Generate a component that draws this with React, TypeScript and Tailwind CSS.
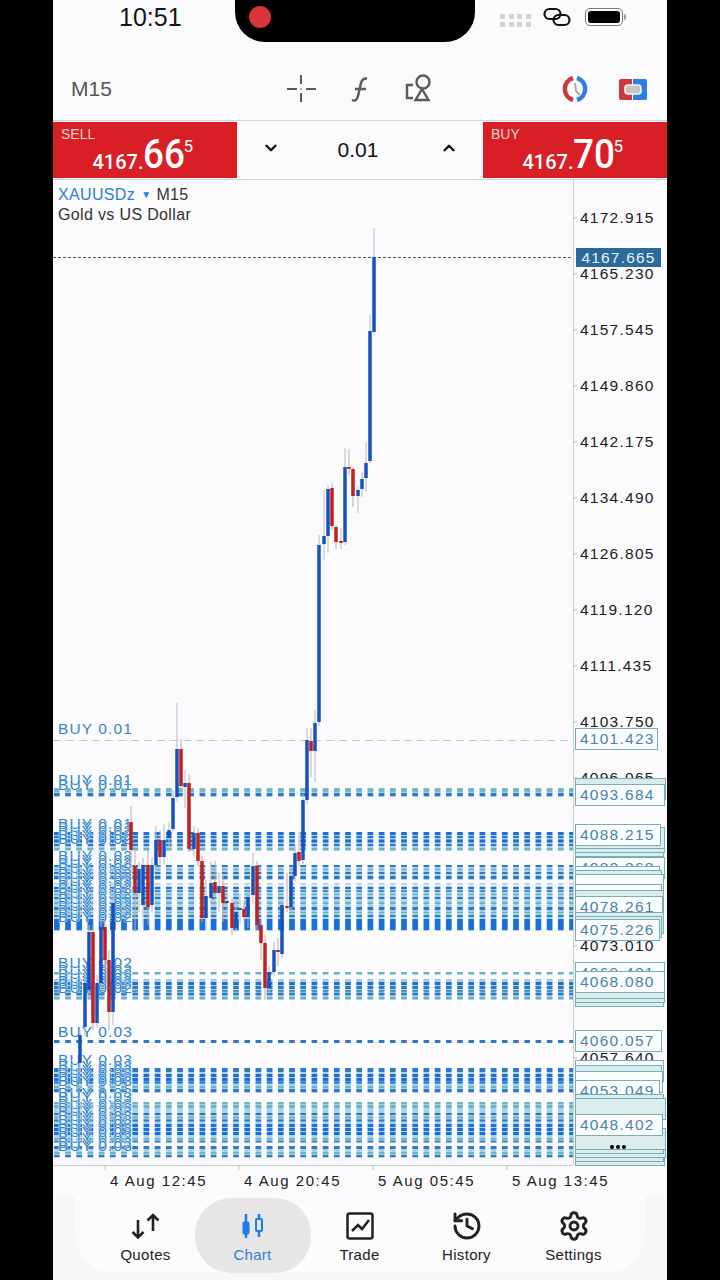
import type React from "react"
import { ChevronDown, ChevronUp, History, Settings } from "lucide-react"

type Candle = [number, number, number, number, number, "b" | "r"]
type Stripe = [number, number, string]
type PriceBox = { y: number; text: string; right: number; filler?: boolean }

const BLUE = "#1c6fd8"
const MID = "#2f78c4"
const TEAL = "#6db3bd"
const GREY = "#a9c6cc"

// x, body top, body bottom, wick top, wick bottom (page coordinates)
const candles: Candle[] = [
  [80, 1035, 1063, 1030, 1072, "b"],
  [85, 983, 1027, 975, 1036, "b"],
  [89, 932, 990, 925, 1000, "b"],
  [93, 932, 1023, 925, 1030, "r"],
  [97, 983, 1023, 975, 1028, "b"],
  [101, 927, 983, 920, 990, "b"],
  [105, 927, 960, 920, 968, "r"],
  [109, 960, 1012, 950, 1030, "r"],
  [113, 903, 1012, 895, 1025, "b"],
  [131, 822, 850, 806, 872, "r"],
  [135, 866, 893, 850, 932, "r"],
  [139, 869, 893, 862, 912, "b"],
  [143, 865, 905, 858, 925, "b"],
  [148, 865, 907, 850, 925, "r"],
  [152, 865, 905, 858, 912, "b"],
  [156, 840, 865, 826, 870, "b"],
  [160, 840, 857, 830, 868, "r"],
  [164, 840, 857, 824, 864, "b"],
  [169, 830, 838, 822, 846, "b"],
  [173, 798, 829, 790, 832, "b"],
  [177, 749, 797, 703, 802, "b"],
  [181, 749, 786, 739, 792, "r"],
  [185, 783, 787, 770, 808, "b"],
  [189, 783, 849, 774, 852, "r"],
  [194, 833, 849, 826, 856, "b"],
  [198, 833, 861, 828, 866, "r"],
  [202, 861, 918, 856, 922, "r"],
  [206, 896, 918, 880, 930, "b"],
  [211, 883, 898, 862, 905, "b"],
  [215, 882, 893, 861, 899, "r"],
  [219, 886, 893, 872, 912, "b"],
  [223, 886, 903, 876, 922, "r"],
  [227, 901, 903, 894, 920, "b"],
  [232, 903, 928, 898, 935, "r"],
  [236, 912, 928, 900, 932, "b"],
  [240, 908, 910, 894, 924, "b"],
  [244, 909, 917, 900, 922, "r"],
  [248, 897, 917, 890, 928, "b"],
  [253, 866, 895, 853, 904, "b"],
  [257, 866, 925, 861, 930, "r"],
  [261, 925, 943, 920, 960, "r"],
  [265, 943, 988, 935, 1000, "r"],
  [269, 972, 988, 966, 994, "b"],
  [274, 950, 972, 942, 976, "b"],
  [278, 950, 952, 938, 966, "r"],
  [282, 905, 954, 900, 958, "b"],
  [287, 906, 908, 873, 912, "r"],
  [291, 876, 907, 868, 912, "b"],
  [295, 853, 876, 845, 882, "b"],
  [299, 852, 861, 832, 866, "r"],
  [303, 800, 860, 794, 864, "b"],
  [307, 740, 800, 728, 804, "b"],
  [311, 741, 751, 728, 777, "r"],
  [315, 723, 751, 710, 782, "b"],
  [319, 545, 722, 535, 726, "b"],
  [324, 536, 544, 490, 560, "b"],
  [328, 489, 536, 485, 553, "b"],
  [332, 488, 526, 483, 530, "r"],
  [336, 527, 542, 525, 549, "r"],
  [341, 541, 543, 528, 549, "r"],
  [345, 467, 542, 448, 545, "b"],
  [349, 467, 469, 449, 475, "r"],
  [353, 469, 496, 467, 507, "r"],
  [358, 490, 496, 486, 513, "b"],
  [362, 479, 489, 472, 497, "b"],
  [366, 463, 478, 442, 492, "b"],
  [370, 331, 461, 315, 463, "b"],
  [374, 257, 332, 228, 335, "b"],
]

// pale wash behind each group of order lines
const bands: [number, number][] = [
  [788, 797], [832, 851], [865, 880], [886, 931], [972, 975], [979, 1000], [1068, 1093], [1102, 1143], [1146, 1158],
]

// order lines: y, thickness, colour. Dense groups give the banded look
const stripes: Stripe[] = [
  [790, 3.5, TEAL], [794.5, 3, MID],
  [833.5, 3, BLUE], [837, 2, MID], [841, 3, BLUE], [845, 2, MID], [849, 2, TEAL],
  [866, 2, MID], [869.5, 1.5, TEAL], [873, 2, MID], [877.5, 3, MID], [884, 1.5, GREY],
  [888, 2, BLUE], [891, 1.5, MID], [894.5, 1.5, TEAL], [898, 2, MID], [903, 2, TEAL],
  [908.5, 3, MID], [912.5, 1.5, TEAL], [916, 2, MID], [920, 2, BLUE], [922.5, 3, BLUE], [927, 6, BLUE],
  [973, 2, TEAL], [980, 1.5, GREY], [983.5, 3, BLUE], [987.5, 3, MID], [991, 1.5, MID], [994, 2.5, MID], [998, 2, TEAL],
  [1041.5, 3, MID],
  [1070, 4, MID], [1075.5, 3, BLUE], [1079.5, 3, BLUE], [1082.5, 2, BLUE], [1087, 2, TEAL], [1090.5, 3, MID],
  [1103, 2, TEAL], [1106.5, 3, TEAL], [1114, 2, MID], [1117.5, 2, TEAL], [1120.5, 2, MID],
  [1125.5, 3, BLUE], [1129.5, 3, BLUE], [1133.5, 3, BLUE], [1139, 2, TEAL], [1141.5, 1.5, MID],
  [1147.5, 3, MID], [1153, 2, TEAL], [1156, 2, MID],
]

const lotFor = (y: number) => (y < 840 ? "0.01" : y < 1000 ? "0.02" : "0.03")

const axisPrices: [number, string][] = [
  [218, "4172.915"], [274, "4165.230"], [330, "4157.545"], [386, "4149.860"],
  [442, "4142.175"], [498, "4134.490"], [554, "4126.805"], [610, "4119.120"],
  [666, "4111.435"], [722, "4103.750"], [778, "4096.065"], [946, "4073.010"],
  [1058, "4057.640"],
]

// painted in order, later boxes sit over earlier ones
const priceBoxes: PriceBox[] = [
  { y: 739, text: "4101.423", right: 658 },
  { y: 789, text: "4094.901", right: 666, filler: true },
  { y: 795, text: "4093.684", right: 665 },
  { y: 846, text: "", right: 664, filler: true },
  { y: 842, text: "", right: 665, filler: true },
  { y: 838, text: "", right: 665, filler: true },
  { y: 835, text: "4088.215", right: 661 },
  { y: 868, text: "4082.868", right: 665 },
  { y: 877, text: "", right: 660 },
  { y: 881, text: "", right: 662, filler: true },
  { y: 885, text: "", right: 664 },
  { y: 895, text: "4080.520", right: 662 },
  { y: 901, text: "", right: 664, filler: true },
  { y: 907, text: "4078.261", right: 663 },
  { y: 923, text: "", right: 664, filler: true },
  { y: 927, text: "", right: 662, filler: true },
  { y: 930, text: "4075.226", right: 660 },
  { y: 996, text: "", right: 664, filler: true },
  { y: 992, text: "", right: 665, filler: true },
  { y: 988, text: "", right: 665, filler: true },
  { y: 973, text: "4069.401", right: 665 },
  { y: 982, text: "4068.080", right: 665 },
  { y: 1041, text: "4060.057", right: 662 },
  { y: 1071, text: "4055.350", right: 664 },
  { y: 1076, text: "", right: 662, filler: true },
  { y: 1082, text: "", right: 663 },
  { y: 1091, text: "4053.049", right: 660 },
  { y: 1105, text: "", right: 664, filler: true },
  { y: 1109, text: "", right: 666, filler: true },
  { y: 1155, text: "", right: 665, filler: true },
  { y: 1151, text: "", right: 664, filler: true },
  { y: 1147, text: "", right: 666, filler: true },
  { y: 1143, text: "", right: 664, filler: true },
  { y: 1139, text: "", right: 666, filler: true },
  { y: 1125, text: "4048.402", right: 663 },
]

const PAGE_X = 53
const CHART_Y = 180

function ChartDrawing() {
  return (
    <svg className="absolute left-0 top-0 h-[985px] w-[614px] overflow-visible" viewBox="53 180 614 985">
      {/* axes */}
      <line x1="573.5" y1="180" x2="573.5" y2="1165" stroke="#cfcfcf" />
      <line x1="53" y1="1165.5" x2="573" y2="1165.5" stroke="#cfcfcf" />
      {axisPrices.map(([y]) => (
        <line key={y} x1="573" y1={y} x2="577" y2={y} stroke="#bdbdbd" />
      ))}
      {[105, 239, 373, 507].map((x) => (
        <line key={x} x1={x} y1="1165" x2={x} y2="1170" stroke="#bdbdbd" />
      ))}

      {/* current price and pending order lines */}
      <line x1="53" y1="257.5" x2="573" y2="257.5" stroke="#555" strokeDasharray="3 2" />
      <line x1="53" y1="740.5" x2="573" y2="740.5" stroke="#b5cfd2" strokeDasharray="8 5" />
      <text x="58" y="734" className="fill-[#3a87bd] text-[15.5px] tracking-[1.1px]">BUY 0.01</text>

      {bands.map(([from, to]) => (
        <line
          key={from}
          x1="54"
          y1={(from + to) / 2}
          x2="573"
          y2={(from + to) / 2}
          stroke="#a6d3ec"
          strokeWidth={to - from}
          strokeDasharray="5.6 5.6"
        />
      ))}
      {stripes.map(([y, h, color]) => (
        <line key={y} x1="54" y1={y} x2="573" y2={y} stroke={color} strokeWidth={h} strokeDasharray="5.6 5.6" />
      ))}
      {stripes.map(([y]) => (
        <text
          key={y}
          x="58"
          y={y - 5}
          stroke="#ffffff"
          strokeWidth="0.7"
          className="fill-[#2b83cc] text-[15.5px] tracking-[1.1px] [paint-order:stroke]"
        >
          BUY {lotFor(y)}
        </text>
      ))}

      {candles.map(([x, top, bottom, wickTop, wickBottom, dir]) => (
        <g key={x}>
          <line x1={x} y1={wickTop} x2={x} y2={wickBottom} stroke={dir === "b" ? "#b4bcc4" : "#c9a9a4"} />
          <rect x={x - 1.75} y={top} width="3.5" height={bottom - top} fill={dir === "b" ? "#1452c2" : "#c41f1c"} />
        </g>
      ))}
    </svg>
  )
}

function PriceScale() {
  return (
    <>
      {axisPrices.map(([y, price]) => (
        <span
          key={price}
          className="absolute left-[527px] text-[15.5px] leading-[18px] tracking-[1.25px] text-[#1c1c1c]"
          style={{ top: y - CHART_Y - 9 }}
        >
          {price}
        </span>
      ))}
      <span className="absolute left-[523px] top-[68px] h-[19px] w-[85px] bg-[#2c6a9c] text-center text-[15.5px] leading-[19px] tracking-[1.2px] text-[#eaf3f8]">
        4167.665
      </span>
      {priceBoxes.map((box, i) => (
        <span
          key={i}
          className={`absolute h-[22px] border border-[#74afbd] pl-[4px] text-[15.5px] leading-[20px] tracking-[1.25px] text-[#4a83ad] ${
            box.filler ? "bg-[#dbeceb]" : "bg-[#fbfdfd]"
          }`}
          style={{ left: 575 - PAGE_X, top: box.y - CHART_Y - 11, width: box.right - 575 }}
        >
          {box.text}
        </span>
      ))}
      <span className="absolute left-[557px] top-[965px] flex gap-[2px]">
        <span className="h-[4px] w-[4px] rounded-full bg-black" />
        <span className="h-[4px] w-[4px] rounded-full bg-black" />
        <span className="h-[4px] w-[4px] rounded-full bg-black" />
      </span>
    </>
  )
}

function SideQuote({ label, big, sup }: { label: string; big: string; sup: string }) {
  return (
    <div className="flex h-full w-[184px] flex-col bg-[#d81f26] text-white">
      <div className="pl-[8px] pt-[3px] text-[14px] leading-[18px] text-[#f6d3d3]">{label}</div>
      <div className="mt-[-6px] flex items-start justify-end pr-[44px] font-['Roboto',sans-serif] leading-none">
        <span className="mt-[13px] text-[20px] leading-[24px] font-medium">4167.</span>
        <span className="w-[40px] origin-left scale-x-[0.92] text-[40px] leading-[36px] font-medium">{big}</span>
        <span className="text-[17px] leading-[18px]">{sup}</span>
      </div>
    </div>
  )
}

function QuotesIcon() {
  return (
    <svg width="30" height="28" viewBox="131 1212 30 28" fill="none" stroke="#222" strokeWidth="2.6">
      <path d="M138 1220v17M132.500 1232l5.500 5.500 5.500-5.500" />
      <path d="M153 1231v-16M147.500 1220.500l5.500-5.500 5.500 5.500" />
    </svg>
  )
}

function ChartIcon() {
  return (
    <svg width="28" height="28" viewBox="239 1212 28 28" fill="none" stroke="#1b7fe6">
      <path d="M246 1214v24" strokeWidth="2.500" />
      <rect x="243" y="1222" width="6" height="12" rx="1" fill="#1b7fe6" />
      <path d="M259 1214v4M259 1231v6" strokeWidth="2.500" />
      <rect x="256" y="1219" width="6" height="12" rx="1" strokeWidth="2" />
    </svg>
  )
}

function TradeIcon() {
  return (
    <svg width="28" height="28" viewBox="345 1212 28 28" fill="none" stroke="#222" strokeWidth="2.500">
      <rect x="346.500" y="1213.500" width="25" height="25" rx="2" />
      <path d="M351 1231l6-6 4 4 7-9" />
    </svg>
  )
}

function NavItem({ label, icon, active }: { label: string; icon: React.ReactNode; active?: boolean }) {
  return (
    <div
      className={`flex h-[75px] flex-col items-center pt-[14px] ${
        active ? "-mx-[4.500px] w-[116px] rounded-[36px] bg-[#e7e6e7] text-[#2f80d0]" : "w-[107px] text-[#222222]"
      }`}
    >
      <div className="flex h-[28px] items-center justify-center">{icon}</div>
      <div className="mt-[5px] text-[15px] leading-[20px] tracking-[0.3px]">{label}</div>
    </div>
  )
}

export default function App() {
  return (
    <div className="flex h-[1280px] w-[720px] justify-center overflow-hidden bg-black font-['Liberation_Sans',Arial,sans-serif]">
      <div className="flex h-full w-[614px] flex-col bg-[#fbfafc]">
        {/* status bar */}
        <div className="flex h-[44px] shrink-0 items-start">
          <div className="w-[182px] pl-[66px] pt-[3px] text-[25px] leading-[28px] text-[#151515]">10:51</div>
          <div className="flex h-[42px] w-[240px] items-center rounded-b-[30px] bg-black pb-[8px] pl-[14px]">
            <div className="h-[22px] w-[22px] rounded-full bg-[#d8343a]" />
          </div>
          <div className="ml-[25px] mt-[14px] grid w-[31px] grid-cols-4 gap-[3px]">
            {Array.from({ length: 8 }).map((_, i) => (
              <span key={i} className="h-[5px] w-[5px] bg-[#d3d3d3]" />
            ))}
          </div>
          <svg className="ml-[12px] mt-[7px]" width="28" height="20" viewBox="0 0 28 20" fill="none" stroke="#111" strokeWidth="2.200">
            <rect x="1.500" y="2" width="16" height="10" rx="5" />
            <rect x="10.500" y="8" width="16" height="10" rx="5" />
          </svg>
          <div className="ml-[14px] mt-[8px] flex h-[18px] items-center">
            <div className="flex h-[18px] w-[38px] items-center rounded-[5px] border border-[#777] p-[2px]">
              <div className="h-full w-full rounded-[3px] bg-black" />
            </div>
            <div className="ml-[1px] h-[6px] w-[2px] rounded-r bg-[#999]" />
          </div>
        </div>

        {/* toolbar */}
        <div className="flex h-[76px] shrink-0 items-center pt-[14px]">
          <div className="w-[233px] pl-[18px] text-[21px] text-[#555555]">M15</div>
          <svg width="30" height="30" viewBox="286 74 30 30" fill="none" stroke="#5a5a5a" strokeWidth="2">
            <path d="M287 89h10M306 89h10M301 75v9M301 93v9" />
            <circle cx="301" cy="89" r="0.800" fill="#5a5a5a" stroke="none" />
          </svg>
          <svg className="ml-[29px]" width="28" height="30" viewBox="345 74 28 30" fill="none" stroke="#5a5a5a" strokeWidth="2.500">
            <path d="M352 100c3 1.500 5 0 6-4l3-13c1-3.500 3-5 6-4.500M355 89h11" />
          </svg>
          <svg className="ml-[30px]" width="28" height="30" viewBox="403 74 28 30" fill="none" stroke="#5a5a5a" strokeWidth="2.400">
            <circle cx="423" cy="82" r="6.500" />
            <path d="M422 89l6.500 11h-13zM413 85h-6v13h6" />
          </svg>
          <svg className="ml-[130px]" width="28" height="28" viewBox="561 75 28 28" fill="none">
            <path d="M573 78a11.500 11.500 0 0 0 0 22" stroke="#c8383c" strokeWidth="4.500" />
            <path d="M577 78a11.500 11.500 0 0 1 0 22" stroke="#2f7fe0" strokeWidth="4.500" />
            <path d="M575 83l1 8 4 4" stroke="#a8a8a8" strokeWidth="2" />
          </svg>
          <svg className="ml-[29px]" width="30" height="24" viewBox="618 77 30 24">
            <path d="M621 79h11v21h-11a2 2 0 0 1-2-2v-17a2 2 0 0 1 2-2z" fill="#c8383c" />
            <path d="M633 79h12a2 2 0 0 1 2 2v17a2 2 0 0 1-2 2h-12z" fill="#2f7fe0" />
            <rect x="625" y="85" width="16" height="9" rx="3" fill="#c4c4c4" stroke="#f4f4f4" strokeWidth="1.500" />
          </svg>
        </div>

        {/* one-click trading */}
        <div className="flex h-[60px] shrink-0 border-y border-y-[#d6d6d6] py-px">
          <SideQuote label="SELL" big="66" sup="5" />
          <div className="flex flex-1 items-center justify-between px-[25px] text-[#111111]">
            <ChevronDown size={18} strokeWidth={3.200} className="-mt-[4px]" />
            <span className="mr-[4px] text-[21px]">0.01</span>
            <ChevronUp size={18} strokeWidth={3.200} className="-mt-[4px]" />
          </div>
          <SideQuote label="BUY" big="70" sup="5" />
        </div>

        {/* chart */}
        <div className="relative h-[985px] shrink-0">
          <ChartDrawing />
          <PriceScale />
          <div className="absolute left-[5px] top-[5px] text-[16px] leading-[20px] tracking-[0.35px] text-[#333333]">
            <div className="flex items-center">
              <span className="text-[#2a80d2]">XAUUSDz</span>
              <span className="ml-[6px] text-[10px] text-[#2a80d2]">▼</span>
              <span className="ml-[5px]">M15</span>
            </div>
            <div>Gold vs US Dollar</div>
          </div>
        </div>

        {/* time axis */}
        <div className="flex h-[32px] shrink-0 items-center pl-[57px] text-[15px] tracking-[1.55px] text-[#222222]">
          <span className="w-[134px]">4 Aug 12:45</span>
          <span className="w-[134px]">4 Aug 20:45</span>
          <span className="w-[134px]">5 Aug 05:45</span>
          <span className="w-[134px]">5 Aug 13:45</span>
        </div>

        {/* bottom tabs */}
        <div className="flex flex-1 bg-[#f7f6f8]">
          <div className="mx-[22px] flex h-[76px] flex-1 rounded-b-[40px] bg-[#fcfbfd] pl-[17px] pt-[1px]">
            <NavItem label="Quotes" icon={<QuotesIcon />} />
            <NavItem label="Chart" icon={<ChartIcon />} active />
            <NavItem label="Trade" icon={<TradeIcon />} />
            <NavItem label="History" icon={<History size={32} strokeWidth={2.200} />} />
            <NavItem label="Settings" icon={<Settings size={32} strokeWidth={2.200} />} />
          </div>
        </div>
      </div>
    </div>
  )
}
